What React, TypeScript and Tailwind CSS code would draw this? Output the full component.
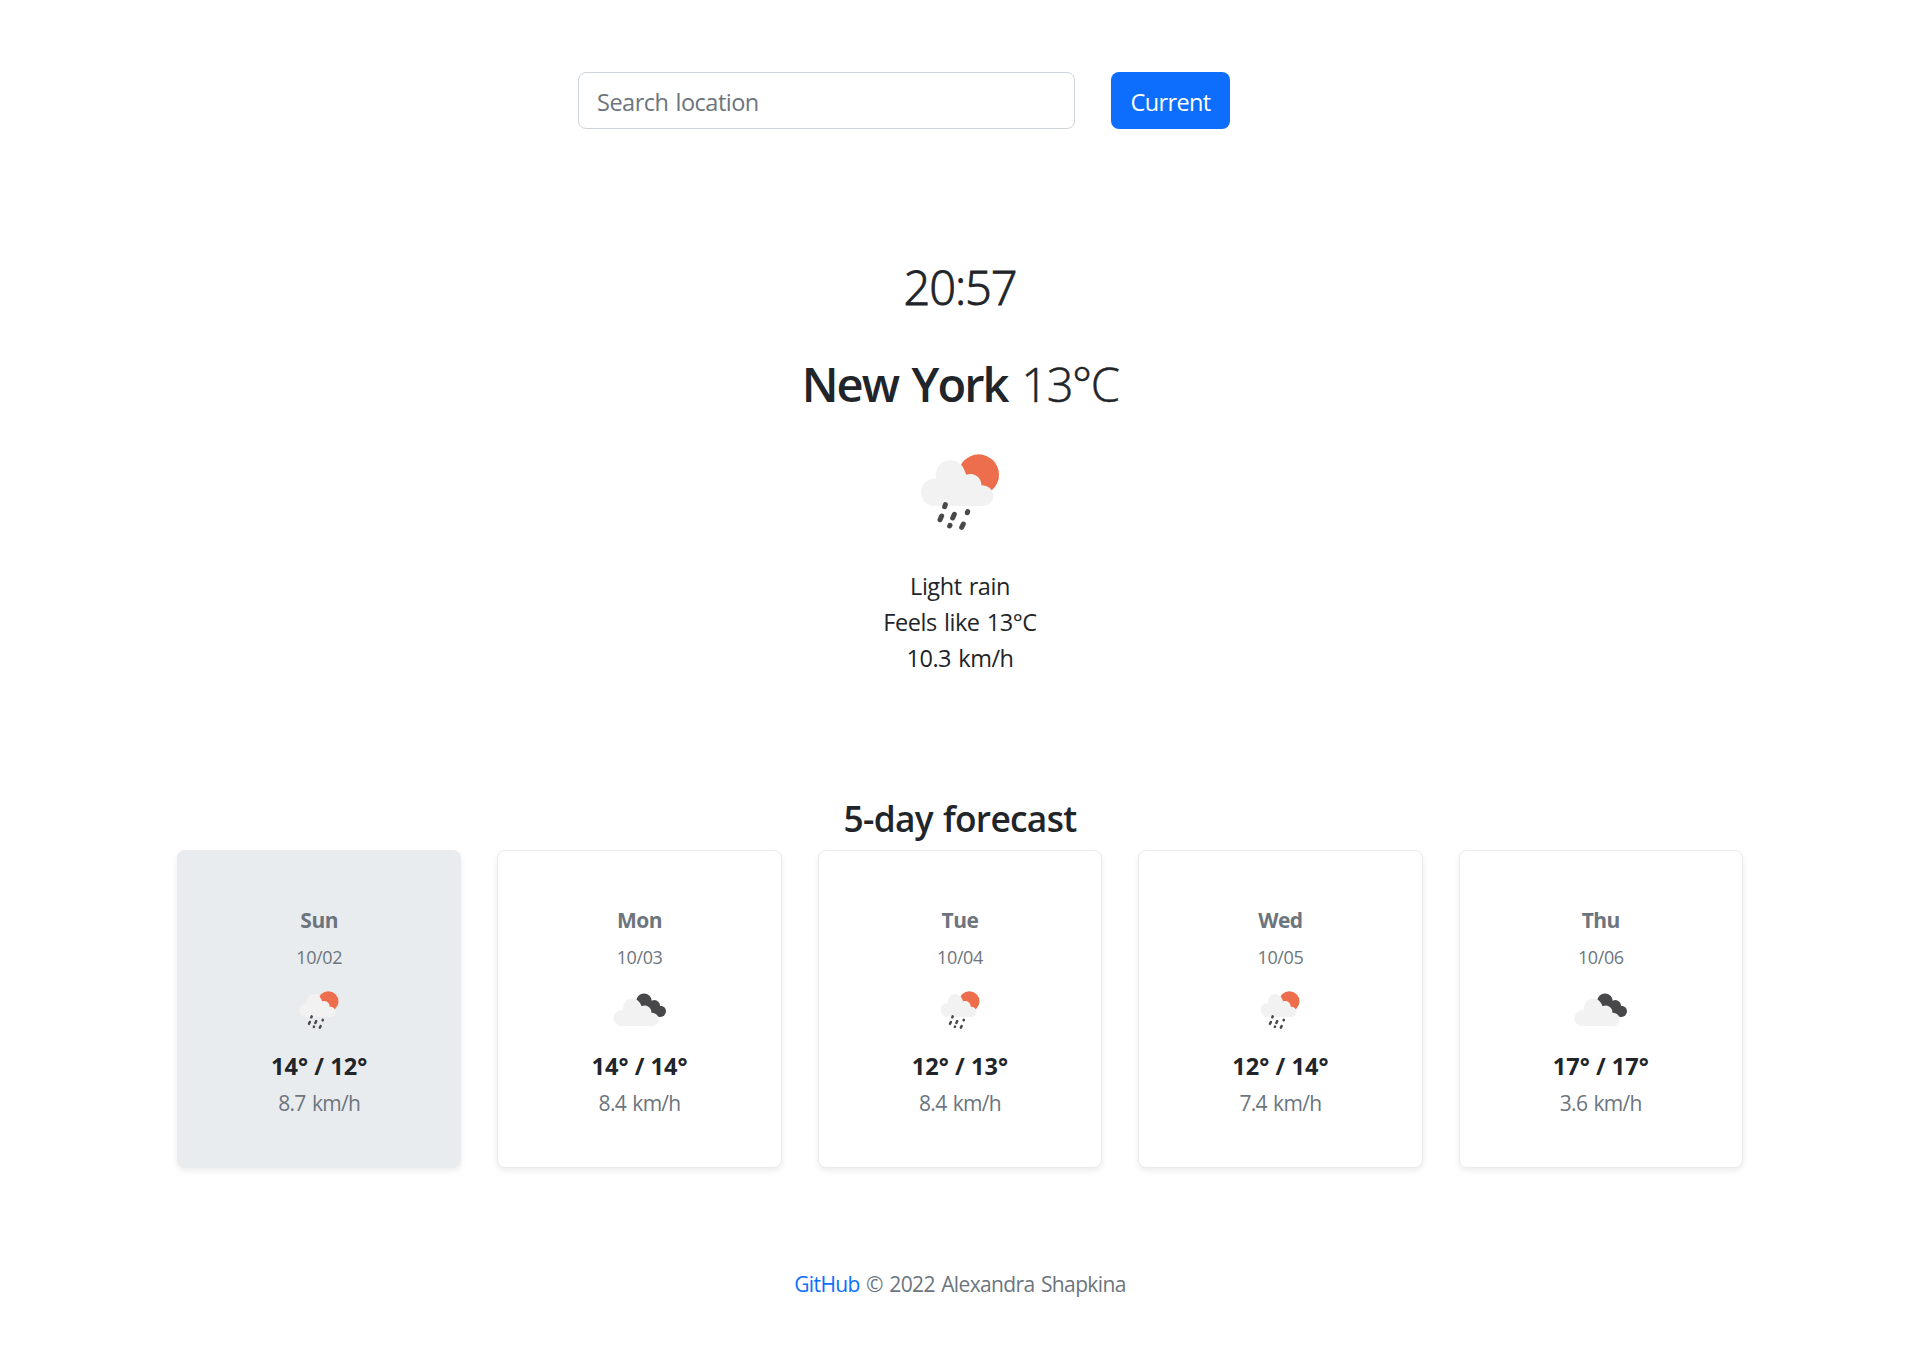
import React from "react";

type IconKind = "rain" | "clouds";

function RainIcon({ className }: { className: string }) {
  return (
    <svg viewBox="0 0 360 300" className={className} aria-hidden="true">
      <circle cx="236" cy="104" r="61" fill="#ec6e4c" />
      <path
        d="M104 198 A41 41 0 0 1 104 116 L109 116 A44 44 0 0 1 193 90 L199 104 A33 33 0 0 1 244 136 A33 33 0 0 1 280 166 A31 31 0 0 1 249 198 Z"
        fill="#f2f2f2"
      />
      <g stroke="#48484a" strokeWidth="15" strokeLinecap="round">
        <path d="M136 194 L134 200" />
        <path d="M125 228 L120 239" />
        <path d="M163 223 L158 234" />
        <path d="M203 215 L202 218" />
        <path d="M150 256 L149 258" />
        <path d="M190 252 L185 262" />
      </g>
    </svg>
  );
}

function CloudsIcon({ className }: { className: string }) {
  return (
    <svg viewBox="30 42 180 150" className={className} aria-hidden="true">
      <g fill="#48484a">
        <circle cx="132" cy="94" r="23.5" />
        <circle cx="163" cy="107" r="17" />
        <circle cx="181" cy="124" r="17" />
        <path d="M132 94 L163 107 L181 141 L150 130 Z" />
      </g>
      <path
        d="M64 168 A23.5 23.5 0 0 1 64 121 L71 121 A27 27 0 0 1 120 99 L125 109 A20 20 0 0 1 154 128 A20 20 0 0 1 158 168 Z"
        fill="#f2f2f2"
      />
    </svg>
  );
}

const days: { day: string; date: string; icon: IconKind; temp: string; wind: string }[] = [
  { day: "Sun", date: "10/02", icon: "rain", temp: "14° / 12°", wind: "8.7 km/h" },
  { day: "Mon", date: "10/03", icon: "clouds", temp: "14° / 14°", wind: "8.4 km/h" },
  { day: "Tue", date: "10/04", icon: "rain", temp: "12° / 13°", wind: "8.4 km/h" },
  { day: "Wed", date: "10/05", icon: "rain", temp: "12° / 14°", wind: "7.4 km/h" },
  { day: "Thu", date: "10/06", icon: "clouds", temp: "17° / 17°", wind: "3.6 km/h" },
];

export default function App() {
  return (
    <div className="flex min-h-[1372px] flex-col items-center bg-white pt-[72px] font-['Open_Sans','Noto_Sans',sans-serif] text-[23.5px] leading-9 text-[#212529]">
      <form className="mr-[112px] flex h-[57px] gap-9">
        <input
          type="text"
          placeholder="Search location"
          className="w-[497px] rounded-lg border border-[#ced4da] px-[18px] pt-[3px] tracking-[-0.5px] [word-spacing:1.5px] placeholder:text-[#6c757d]"
        />
        <button type="button" className="w-[119px] rounded-lg bg-[#0d6efd] pt-[3px] tracking-[-0.65px] text-white">
          Current
        </button>
      </form>

      <main className="flex w-[1566px] flex-col items-center">
        <time className="mt-[129px] h-[58px] text-[47px] leading-[58px] font-light tracking-[-1.1px] [-webkit-text-stroke:0.9px_#212529]">
          20:57
        </time>
        <h1 className="mt-[39px] h-[58px] whitespace-nowrap text-[47px] leading-[58px] tracking-[-1.5px] [word-spacing:3px]">
          <span className="font-semibold tracking-[-1.9px]">New York</span>{" "}
          <span className="font-light [-webkit-text-stroke:0.5px_#212529]">13°C</span>
        </h1>
        <RainIcon className="mt-[27px] h-[100px] w-[120px]" />
        <div className="mt-7 text-center tracking-[-0.45px] [word-spacing:1.5px]">
          <p>Light rain</p>
          <p>Feels like 13°C</p>
          <p>10.3 km/h</p>
        </div>

        <h2 className="mt-[120px] h-11 text-[35.3px] leading-[44px] font-semibold tracking-[-0.7px] [word-spacing:1.5px]">
          5-day forecast
        </h2>
        <section className="mt-[10px] grid w-full grid-cols-5 gap-9">
          {days.map((d, i) => (
            <article
              key={d.day}
              className={`flex h-[318px] flex-col items-center rounded-lg border pt-[51px] shadow-[0_3px_6px_rgba(0,0,0,0.075)] ${
                i === 0 ? "border-[#e9ecef] bg-[#e9ecef]" : "border-[#e9ecef] bg-white"
              }`}
            >
              <h3 className="text-[21px] font-bold tracking-[-0.5px] text-[#6c757d]">{d.day}</h3>
              <p className="mt-px text-lg leading-9 tracking-[-0.4px] text-[#6c757d]">{d.date}</p>
              {d.icon === "rain" ? (
                <RainIcon className="mt-[9px] h-[50px] w-[60px]" />
              ) : (
                <CloudsIcon className="mt-[9px] h-[50px] w-[60px]" />
              )}
              <p className="mt-[14px] font-bold tracking-[0.05px]">{d.temp}</p>
              <p className="mt-px text-[21px] tracking-[-0.7px] [word-spacing:1.5px] text-[#6c757d]">{d.wind}</p>
            </article>
          ))}
        </section>
      </main>

      <footer className="mt-[98px] text-[21px] tracking-[-0.62px] [word-spacing:1.5px] text-[#6c757d]">
        <a href="#" className="text-[#0d6efd]">
          GitHub
        </a>{" "}
        © 2022 Alexandra Shapkina
      </footer>
    </div>
  );
}
